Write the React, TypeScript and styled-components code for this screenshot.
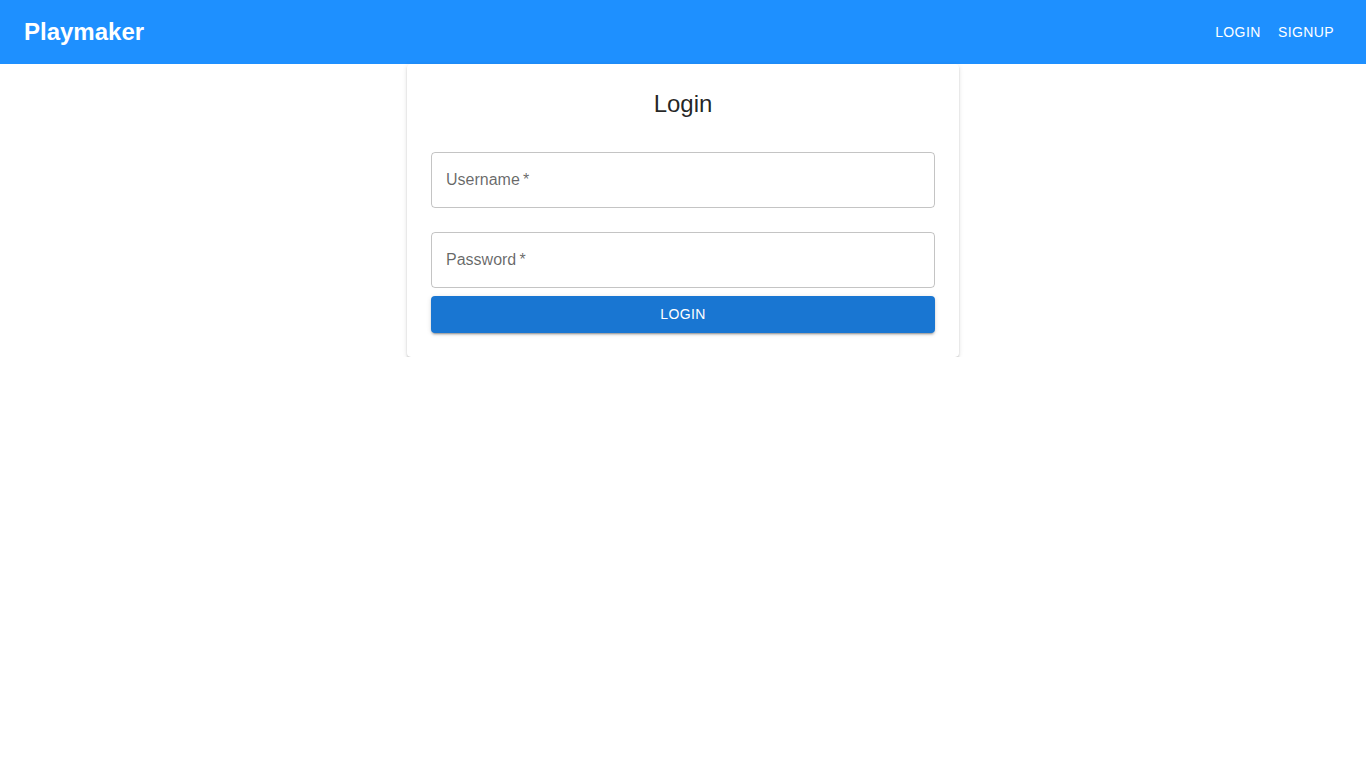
import React from "react";
import styled, { createGlobalStyle } from "styled-components";

const GlobalStyle = createGlobalStyle`
  html, body { margin: 0; padding: 0; background: #ffffff; }
  body { font-family: "Liberation Sans", Arial, sans-serif; }
  * { box-sizing: border-box; }
`;

const AppBar = styled.header`
  height: 64px;
  background: #1e90ff;
  display: flex;
  align-items: center;
  justify-content: space-between;
  padding: 0 24px;
  color: #ffffff;
`;

const Brand = styled.div`
  font-size: 24px;
  font-weight: 700;
  line-height: 1;
`;

const Nav = styled.nav`
  display: flex;
`;

const NavButton = styled.button`
  background: transparent;
  border: none;
  color: #ffffff;
  font-family: "Liberation Sans", Arial, sans-serif;
  font-size: 14px;
  font-weight: 500;
  letter-spacing: 0.4px;
  text-transform: uppercase;
  padding: 6px 8px;
  min-width: 64px;
  line-height: 1.75;
  border-radius: 4px;
  cursor: pointer;
`;

const Main = styled.main`
  display: flex;
  justify-content: center;
`;

const Card = styled.section`
  width: 552px;
  background: #ffffff;
  border-radius: 4px;
  box-shadow: 0px 3px 1px -2px rgba(0, 0, 0, 0.2), 0px 2px 2px 0px rgba(0, 0, 0, 0.14),
    0px 1px 5px 0px rgba(0, 0, 0, 0.12);
  padding: 24px;
  display: flex;
  flex-direction: column;
`;

const Title = styled.h1`
  margin: 0 0 16px;
  font-size: 24px;
  font-weight: 400;
  line-height: 32px;
  text-align: center;
  color: rgba(0, 0, 0, 0.87);
`;

const Field = styled.div`
  margin: 16px 0 8px;
  height: 56px;
  border: 1px solid rgba(0, 0, 0, 0.23);
  border-radius: 4px;
  display: flex;
  align-items: center;
  padding: 0 14px 2px;
`;

const Label = styled.label`
  font-size: 16px;
  color: rgba(0, 0, 0, 0.6);
  line-height: 1.4375;
`;

const SubmitButton = styled.button`
  height: 36.5px;
  border: none;
  border-radius: 4px;
  background: #1976d2;
  color: #ffffff;
  font-family: "Liberation Sans", Arial, sans-serif;
  font-size: 14px;
  font-weight: 500;
  letter-spacing: 0.4px;
  text-transform: uppercase;
  box-shadow: 0px 3px 1px -2px rgba(0, 0, 0, 0.2), 0px 2px 2px 0px rgba(0, 0, 0, 0.14),
    0px 1px 5px 0px rgba(0, 0, 0, 0.12);
  cursor: pointer;
`;

export default function App() {
  return (
    <>
      <GlobalStyle />
      <AppBar>
        <Brand>Playmaker</Brand>
        <Nav>
          <NavButton>Login</NavButton>
          <NavButton>Signup</NavButton>
        </Nav>
      </AppBar>
      <Main>
        <Card>
          <Title>Login</Title>
          <Field>
            <Label>Username{"\u2009"}*</Label>
          </Field>
          <Field>
            <Label>Password{"\u2009"}*</Label>
          </Field>
          <SubmitButton>Login</SubmitButton>
        </Card>
      </Main>
    </>
  );
}
